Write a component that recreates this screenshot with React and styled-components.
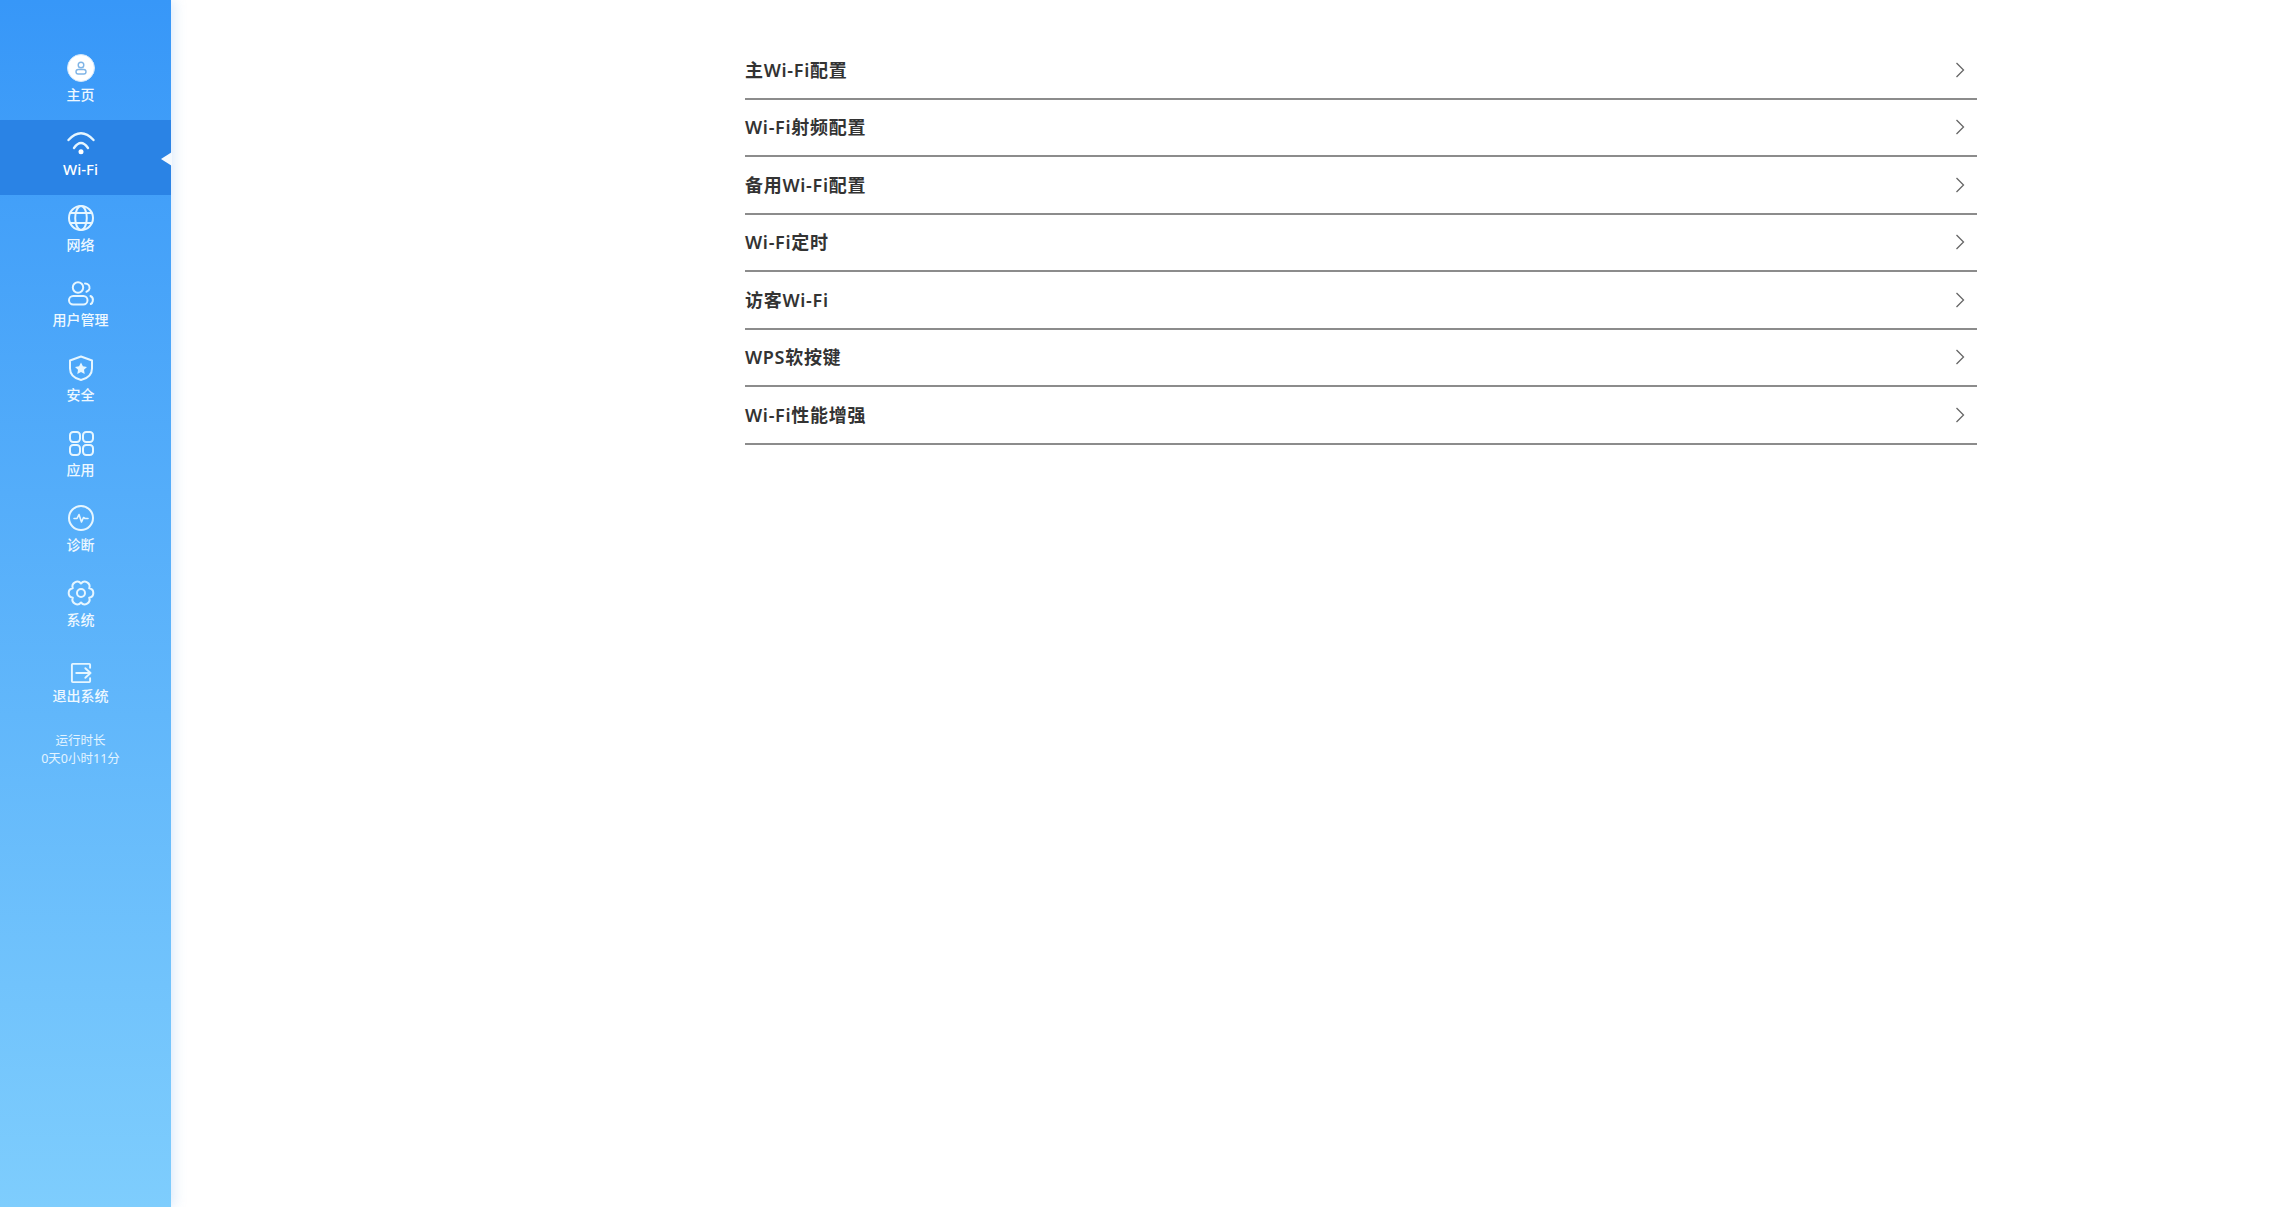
import React from 'react';
import styled, { createGlobalStyle } from 'styled-components';

const cjk = '"Noto Sans", "Noto Sans CJK SC", sans-serif';

const GlobalStyle = createGlobalStyle`
  html, body {
    margin: 0;
    padding: 0;
    background: #fff;
    font-family: ${cjk};
  }
`;

const Page = styled.div`
  display: flex;
  height: 1207px;
  overflow: hidden;
`;

const Sidebar = styled.nav`
  width: 171px;
  flex: none;
  padding-top: 45px;
  box-sizing: border-box;
  background: linear-gradient(180deg, #3797f8 0%, #7ecdfd 100%);
  box-shadow: 3px 0 12px rgba(90, 160, 230, 0.22);
  color: #fff;
`;

const NavItem = styled.div`
  position: relative;
  height: ${p => (p.$exit ? '79px' : '75px')};
  padding-right: 10px;
  padding-top: ${p => (p.$exit ? '5px' : '0')};
  box-sizing: border-box;
  display: flex;
  flex-direction: column;
  align-items: center;
  justify-content: flex-start;
  background: ${p => (p.$active ? '#2a83e5' : 'transparent')};
`;

const IconSlot = styled.div`
  height: 46px;
  width: 100%;
  display: flex;
  align-items: center;
  justify-content: center;
  margin-bottom: ${p => (p.$exit ? '-10px' : '-6px')};
`;

const Label = styled.span`
  font-size: ${p => (p.$active ? '15px' : '14px')};
  font-weight: 500;
  line-height: 20px;
  margin-top: ${p => (p.$active ? '-1px' : '0')};
  color: ${p => (p.$active ? '#fff' : '#eef8ff')};
`;

const Pointer = styled.i`
  position: absolute;
  right: -1px;
  top: 32px;
  width: 0;
  height: 0;
  border-top: 7px solid transparent;
  border-bottom: 7px solid transparent;
  border-right: 11px solid #f4f9fe;
`;

const Uptime = styled.div`
  padding-right: 10px;
  margin-top: 8px;
  text-align: center;
  font-size: 12.5px;
  line-height: 18px;
  color: #e3f4ff;
`;

const Content = styled.main`
  flex: 1;
  padding: 42px 303px 0 574px;
`;

const Row = styled.div`
  height: 57.5px;
  box-sizing: border-box;
  display: flex;
  align-items: center;
  justify-content: space-between;
  border-bottom: 2px solid #8c8c8c;
  padding: 0 12px 0 0;
  font-size: 18px;
  font-weight: 600;
  letter-spacing: 0.7px;
  color: #333;
`;

const RowTitle = styled.span`
  padding-bottom: 2px;
`;

const Svg = styled.svg`
  display: block;
  fill: none;
  stroke: #e6f6ff;
  stroke-width: 2;
  stroke-linecap: round;
  stroke-linejoin: round;
`;

const Icon = ({ size = 30, children }) => (
  <Svg width={size} height={size} viewBox="0 0 30 30">{children}</Svg>
);

const HomeIcon = () => (
  <Icon>
    <circle cx="15" cy="15" r="13.5" fill="#fff" stroke="#cfe6fb" strokeWidth="1" />
    <circle cx="15" cy="12" r="2.8" stroke="#7fb4e6" strokeWidth="1.4" />
    <rect x="10" y="16.5" width="10" height="4.5" rx="2.2" stroke="#7fb4e6" strokeWidth="1.4" />
  </Icon>
);

const WifiIcon = () => (
  <Icon>
    <path d="M2.5 12Q15 -1.5 27.5 12" strokeWidth="2.4" />
    <path d="M8 20Q15 10 22 20" strokeWidth="2.4" />
    <circle cx="15" cy="23.7" r="2.5" fill="#fff" stroke="none" />
  </Icon>
);

const GlobeIcon = () => (
  <Icon>
    <circle cx="15" cy="15" r="12" />
    <ellipse cx="15" cy="15" rx="5.8" ry="12" />
    <path d="M4.5 10H25.5M4.5 20H25.5" />
  </Icon>
);

const UsersIcon = () => (
  <Icon>
    <circle cx="12" cy="9.5" r="5.2" />
    <rect x="3" y="18" width="18.5" height="8.5" rx="4.2" />
    <path d="M19 5.5C22 5.5 24 7.5 23.5 10.5C23.2 12 22.2 13.2 20.5 13.8" />
    <path d="M24.5 18C26.5 19 27.2 21 26.8 23C26.5 24.5 25.8 25.5 24.8 26" />
  </Icon>
);

const ShieldIcon = () => (
  <Icon>
    <path d="M15 3.5L26 7.5V15.5C26 21.5 21.5 25.5 15 27C8.5 25.5 4 21.5 4 15.5V7.5Z" />
    <path
      d="M15 9.5L16.9 13.3L21 13.9L18 16.8L18.7 20.9L15 19L11.3 20.9L12 16.8L9 13.9L13.1 13.3Z"
      fill="#e6f6ff"
      stroke="none"
    />
  </Icon>
);

const AppsIcon = () => (
  <Icon>
    <rect x="4" y="4" width="10" height="10" rx="3.2" />
    <rect x="17" y="4" width="10" height="10" rx="3.2" />
    <rect x="4" y="17" width="10" height="10" rx="3.2" />
    <rect x="17" y="17" width="10" height="10" rx="3.2" />
  </Icon>
);

const DiagnoseIcon = () => (
  <Icon>
    <circle cx="15" cy="15" r="12" />
    <path d="M8 15.5H11L13 11.5L15.5 19L17.5 14.5L19 15.5H22" strokeWidth="1.6" />
  </Icon>
);

const GearIcon = () => (
  <Icon>
    <path d="M15 5.5A4.8 4.8 0 0 1 23.2 10.25A4.8 4.8 0 0 1 23.2 19.75A4.8 4.8 0 0 1 15 24.5A4.8 4.8 0 0 1 6.8 19.75A4.8 4.8 0 0 1 6.8 10.25A4.8 4.8 0 0 1 15 5.5Z" />
    <circle cx="15" cy="15" r="4" />
  </Icon>
);

const ExitIcon = () => (
  <Icon size={26}>
    <path d="M25.5 9V5.5C25.5 5 25 4.5 24.5 4.5H5.5C5 4.5 4.5 5 4.5 5.5V24.5C4.5 25 5 25.5 5.5 25.5H24.5C25 25.5 25.5 25 25.5 24.5V21" strokeWidth="2.2" />
    <path d="M9.5 15H26M20 9.5L26 15L20 20.5" strokeWidth="2.2" />
  </Icon>
);

const Chevron = () => (
  <svg width="10" height="16" viewBox="0 0 10 16" fill="none" stroke="#666" strokeWidth="1.3">
    <path d="M1.5 1L8.5 8L1.5 15" />
  </svg>
);

const navItems = [
  { label: '主页', icon: <HomeIcon /> },
  { label: 'Wi-Fi', icon: <WifiIcon />, active: true },
  { label: '网络', icon: <GlobeIcon /> },
  { label: '用户管理', icon: <UsersIcon /> },
  { label: '安全', icon: <ShieldIcon /> },
  { label: '应用', icon: <AppsIcon /> },
  { label: '诊断', icon: <DiagnoseIcon /> },
  { label: '系统', icon: <GearIcon /> },
  { label: '退出系统', icon: <ExitIcon />, exit: true },
];

const rows = [
  '主Wi-Fi配置',
  'Wi-Fi射频配置',
  '备用Wi-Fi配置',
  'Wi-Fi定时',
  '访客Wi-Fi',
  'WPS软按键',
  'Wi-Fi性能增强',
];

export default function App() {
  return (
    <Page>
      <GlobalStyle />
      <Sidebar>
        {navItems.map(item => (
          <NavItem key={item.label} $active={item.active} $exit={item.exit}>
            <IconSlot $exit={item.exit}>{item.icon}</IconSlot>
            <Label $active={item.active}>{item.label}</Label>
            {item.active && <Pointer />}
          </NavItem>
        ))}
        <Uptime>
          运行时长
          <br />
          0天0小时11分
        </Uptime>
      </Sidebar>
      <Content>
        {rows.map(r => (
          <Row key={r}>
            <RowTitle>{r}</RowTitle>
            <Chevron />
          </Row>
        ))}
      </Content>
    </Page>
  );
}
